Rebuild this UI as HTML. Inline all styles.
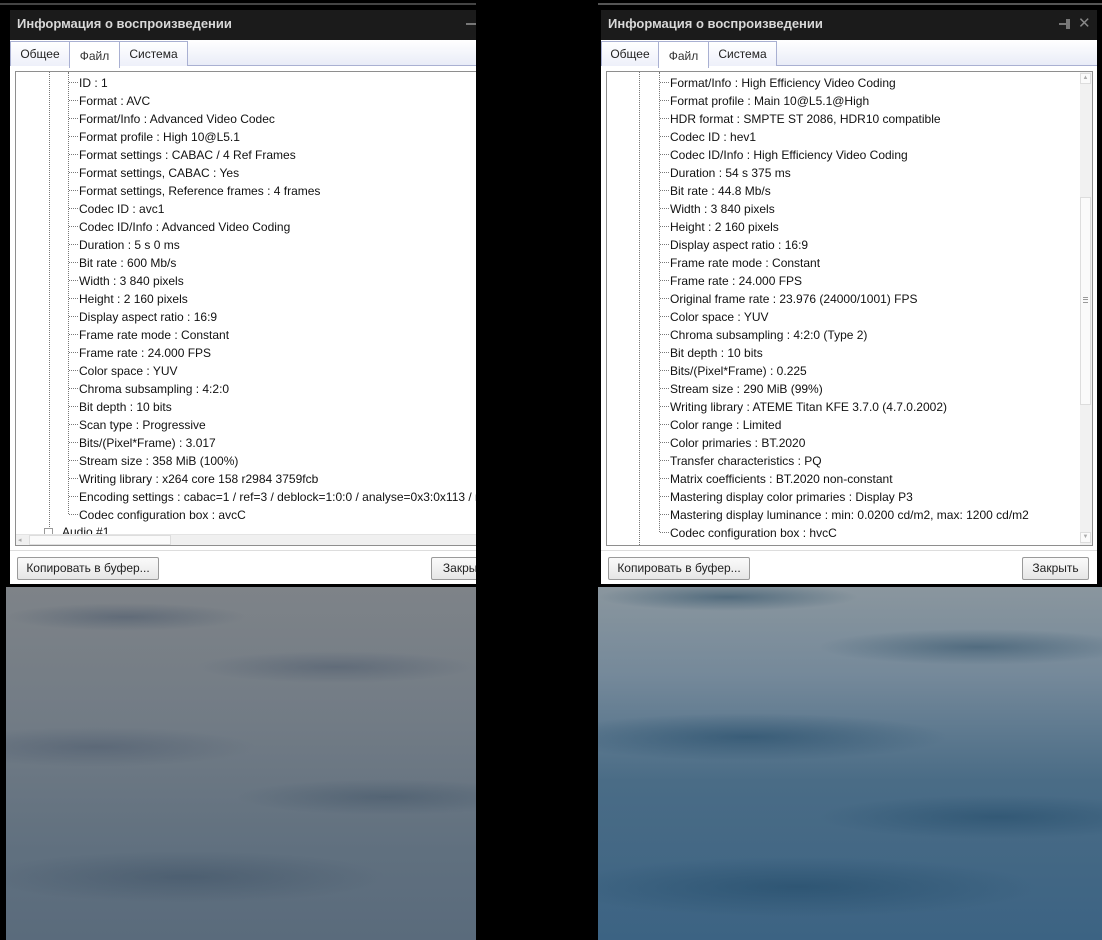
<!DOCTYPE html>
<html><head><meta charset="utf-8"><style>
*{margin:0;padding:0;box-sizing:border-box}
body{width:1102px;height:940px;background:#000;position:relative;overflow:hidden;font-family:"Liberation Sans","DejaVu Sans",sans-serif;font-size:12px;color:#000}
.abs{position:absolute}
.win{position:absolute;top:10px;height:574px;background:#fff;overflow:hidden}
.title{position:absolute;left:0;top:0;right:0;height:30px;background:#1b1b1b;color:#d8d8d8;font-weight:bold;font-size:13px;line-height:28px;padding-left:7px}
.tabbar{position:absolute;left:0;right:0;top:30px;height:26px;background:linear-gradient(#fff,#e9ecf7);border-bottom:1px solid #a9b0d2}
.tab{position:absolute;top:31px;height:25px;border:1px solid #a9b0d2;border-bottom:none;background:linear-gradient(#fff,#eef0fa);line-height:25px;text-align:center;color:#222}
.tab.act{background:#fff;height:27px;top:31px;color:#333;line-height:28px;z-index:2}
.list{position:absolute;top:61px;height:475px;border:1px solid #8e8e8e;background:#fff;overflow:hidden}
.row{position:absolute;height:18px;line-height:18px;white-space:nowrap;color:#111}
.vd{position:absolute;width:0;border-left:1px dotted #777}
.hd{position:absolute;height:0;width:9px;border-top:1px dotted #777}
.btn{position:absolute;top:547px;height:23px;border:1px solid #9a9a9a;border-radius:2px;background:linear-gradient(#fafafa,#e6e6e6);line-height:20px;text-align:center;color:#222}
.sep{position:absolute;left:0;right:0;top:540px;border-top:1px solid #ddd}
.ocean{position:absolute;top:587px;height:353px}
</style></head><body>

<div class="ocean" style="left:6px;width:470px;background:
radial-gradient(ellipse 120px 14px at 120px 30px,rgba(70,85,105,.5),transparent),
radial-gradient(ellipse 140px 16px at 330px 80px,rgba(70,85,105,.45),transparent),
radial-gradient(ellipse 160px 20px at 90px 160px,rgba(70,85,105,.45),transparent),
radial-gradient(ellipse 150px 18px at 380px 210px,rgba(60,80,100,.45),transparent),
radial-gradient(ellipse 200px 26px at 180px 290px,rgba(60,80,100,.5),transparent),
linear-gradient(#7e8388,#717b85 40%,#60707f 75%,#5a6b7c)"></div>
<div class="ocean" style="left:598px;width:504px;background:
radial-gradient(ellipse 130px 14px at 130px 10px,rgba(40,75,100,.55),transparent),
radial-gradient(ellipse 160px 18px at 380px 60px,rgba(40,75,100,.5),transparent),
radial-gradient(ellipse 200px 24px at 150px 150px,rgba(35,75,105,.6),transparent),
radial-gradient(ellipse 180px 22px at 400px 230px,rgba(35,75,105,.55),transparent),
radial-gradient(ellipse 240px 30px at 200px 300px,rgba(35,75,105,.6),transparent),
linear-gradient(#8a969e,#75899a 25%,#4a6c86 55%,#3c6383)"></div>
<div class="abs" style="left:476px;top:0;width:122px;height:940px;background:#000"></div>
<div class="abs" style="left:0;top:3px;width:476px;height:2px;background:#444"></div>
<div class="abs" style="left:598px;top:3px;width:504px;height:2px;background:#555"></div>

<div class="win" style="left:10px;width:466px">
 <div class="title">Информация о воспроизведении</div>
 <div class="abs" style="left:456px;top:13px;width:10px;height:2px;background:#777"></div>
 <div class="tabbar"></div>
 <div class="tab" style="left:0;width:60px">Общее</div>
 <div class="tab act" style="left:59px;width:51px">Файл</div>
 <div class="tab" style="left:109px;width:69px">Система</div>
 <div class="list" style="left:5px;width:470px">
  <div class="vd" style="left:33px;top:0;height:465px"></div>
  <div class="vd" style="left:52px;top:0;height:442px"></div>
  <div class="abs" style="left:28px;top:456px;width:9px;height:9px;border:1px solid #999;background:#fff"></div>
  <div class="row" style="left:46px;top:451px">Audio #1</div>
  <div class="abs" style="left:0;top:462px;width:470px;height:12px;background:#f0f0f0;border-top:1px solid #e4e4e4"></div>
  <div class="abs" style="left:13px;top:463px;width:142px;height:10px;background:#fafafa;border:1px solid #ddd"></div>
  <div class="abs" style="left:2px;top:464px;font-size:7px;color:#aaa">◂</div>
  <div id="L"></div>
 </div>
 <div class="sep"></div>
 <div class="btn" style="left:7px;width:142px">Копировать в буфер...</div>
 <div class="btn" style="left:421px;width:70px">Закрыть</div>
</div>

<div class="win" style="left:601px;width:496px">
 <div class="title">Информация о воспроизведении</div>
 <div class="abs" style="left:458px;top:13px;width:10px;height:2px;background:#777"></div>
 <div class="abs" style="left:465px;top:9px;width:4px;height:10px;background:#777"></div>
 <div class="abs" style="left:477px;top:4px;color:#888;font-size:15px">✕</div>
 <div class="tabbar"></div>
 <div class="tab" style="left:0;width:58px">Общее</div>
 <div class="tab act" style="left:57px;width:51px">Файл</div>
 <div class="tab" style="left:107px;width:69px">Система</div>
 <div class="list" style="left:5px;width:487px">
  <div class="vd" style="left:32px;top:0;height:475px"></div>
  <div class="vd" style="left:52px;top:0;height:460px"></div>
  <div class="abs" style="left:473px;top:0;width:12px;height:473px;background:#f1f1f1"></div>
  <div class="abs" style="left:473px;top:1px;width:11px;height:11px;border:1px solid #ddd;background:#fafafa;font-size:6px;color:#aaa;text-align:center;line-height:9px">▲</div>
  <div class="abs" style="left:473px;top:460px;width:11px;height:11px;border:1px solid #ddd;background:#fafafa;font-size:6px;color:#aaa;text-align:center;line-height:9px">▼</div>
  <div class="abs" style="left:473px;top:125px;width:11px;height:208px;border:1px solid #ddd;background:#fafafa"></div>
  <div class="abs" style="left:476px;top:225px;width:5px;height:6px;border-top:1px solid #999;border-bottom:1px solid #999"></div>
  <div class="abs" style="left:476px;top:227px;width:5px;height:1px;background:#999"></div>
  <div id="R"></div>
 </div>
 <div class="sep"></div>
 <div class="btn" style="left:7px;width:142px">Копировать в буфер...</div>
 <div class="btn" style="left:421px;width:67px">Закрыть</div>
</div>

<script>
var L=["ID : 1","Format : AVC","Format/Info : Advanced Video Codec","Format profile : High 10@L5.1","Format settings : CABAC / 4 Ref Frames","Format settings, CABAC : Yes","Format settings, Reference frames : 4 frames","Codec ID : avc1","Codec ID/Info : Advanced Video Coding","Duration : 5 s 0 ms","Bit rate : 600 Mb/s","Width : 3 840 pixels","Height : 2 160 pixels","Display aspect ratio : 16:9","Frame rate mode : Constant","Frame rate : 24.000 FPS","Color space : YUV","Chroma subsampling : 4:2:0","Bit depth : 10 bits","Scan type : Progressive","Bits/(Pixel*Frame) : 3.017","Stream size : 358 MiB (100%)","Writing library : x264 core 158 r2984 3759fcb","Encoding settings : cabac=1 / ref=3 / deblock=1:0:0 / analyse=0x3:0x113 / me=hex","Codec configuration box : avcC"];
var R=["Format/Info : High Efficiency Video Coding","Format profile : Main 10@L5.1@High","HDR format : SMPTE ST 2086, HDR10 compatible","Codec ID : hev1","Codec ID/Info : High Efficiency Video Coding","Duration : 54 s 375 ms","Bit rate : 44.8 Mb/s","Width : 3 840 pixels","Height : 2 160 pixels","Display aspect ratio : 16:9","Frame rate mode : Constant","Frame rate : 24.000 FPS","Original frame rate : 23.976 (24000/1001) FPS","Color space : YUV","Chroma subsampling : 4:2:0 (Type 2)","Bit depth : 10 bits","Bits/(Pixel*Frame) : 0.225","Stream size : 290 MiB (99%)","Writing library : ATEME Titan KFE 3.7.0 (4.7.0.2002)","Color range : Limited","Color primaries : BT.2020","Transfer characteristics : PQ","Matrix coefficients : BT.2020 non-constant","Mastering display color primaries : Display P3","Mastering display luminance : min: 0.0200 cd/m2, max: 1200 cd/m2","Codec configuration box : hvcC"];
function fill(id,a,lx,tx){var h="";a.forEach(function(t,i){var top=i*18;h+='<div class="hd" style="left:'+lx+'px;top:'+(top+10)+'px"></div><div class="row" style="left:'+tx+'px;top:'+(top+2)+'px">'+t+'</div>';});document.getElementById(id).innerHTML=h;}
fill("L",L,53,63);fill("R",R,53,63);
</script>
</body></html>
